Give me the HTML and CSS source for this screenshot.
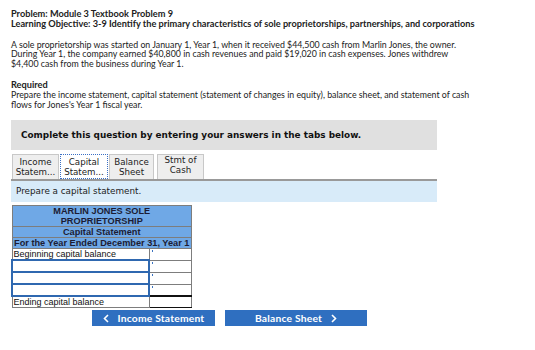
FILE: index.html
```html
<!DOCTYPE html>
<html lang="en">
<head>
    <meta charset="UTF-8">
    <title>Module 3 Textbook Problem 9</title>
    <link rel="stylesheet" href="styles.css">
</head>
<body>
    <div class="intro">
        <p class="heading">Problem: Module 3 Textbook Problem 9<br>Learning Objective: 3-9 Identify the primary characteristics of sole proprietorships, partnerships, and corporations</p>
        <p>A sole proprietorship was started on January 1, Year 1, when it received $44,500 cash from Marlin Jones, the owner. During Year 1, the company earned $40,800 in cash revenues and paid $19,020 in cash expenses. Jones withdrew $4,400 cash from the business during Year 1.</p>
        <p><span class="heading">Required</span><br>Prepare the income statement, capital statement (statement of changes in equity), balance sheet, and statement of cash flows for Jones's Year 1 fiscal year.</p>
    </div>

    <div class="question">
        <div class="banner">Complete this question by entering your answers in the tabs below.</div>
        <div class="tabs">
            <div class="tab tab-income">Income<br>Statem...</div>
            <div class="tab tab-capital active">Capital<br>Statem...</div>
            <div class="tab tab-balance">Balance<br>Sheet</div>
            <div class="tab tab-cash">Stmt of<br>Cash</div>
        </div>
        <div class="prompt">Prepare a capital statement.</div>

        <table class="sheet">
            <tr><th colspan="2">MARLIN JONES SOLE<br>PROPRIETORSHIP</th></tr>
            <tr><th colspan="2">Capital Statement</th></tr>
            <tr><th colspan="2">For the Year Ended December 31, Year 1</th></tr>
            <tr><td class="label">Beginning capital balance</td><td class="amount"></td></tr>
            <tr><td class="label input"></td><td class="amount"></td></tr>
            <tr><td class="label input"></td><td class="amount"></td></tr>
            <tr><td class="label input"></td><td class="amount"></td></tr>
            <tr><td class="label">Ending capital balance</td><td class="amount total"></td></tr>
        </table>

        <div class="nav">
            <button class="nav-btn prev">
                <svg class="chev" width="6" height="9" viewBox="0 0 6 9"><path d="M5 1 L1.5 4.5 L5 8" fill="none" stroke="#fff" stroke-width="1.6"/></svg>
                Income Statement
            </button>
            <button class="nav-btn next">
                Balance Sheet
                <svg class="chev" width="6" height="9" viewBox="0 0 6 9"><path d="M1 1 L4.5 4.5 L1 8" fill="none" stroke="#fff" stroke-width="1.6"/></svg>
            </button>
        </div>
    </div>
</body>
</html>
```

FILE: styles.css
```css
body {
    margin: 0;
    padding: 9px 11px;
    font-family: 'Lato', 'Open Sans', sans-serif;
    font-size: 8.8px;
    color: #222;
}
.intro p {
    margin: 0 0 11px 0;
    line-height: 9.8px;
    max-width: 460px;
}
.intro p.heading {
    white-space: nowrap;
}
.heading {
    font-weight: bold;
    font-size: 9.2px;
}
.question {
    width: 426px;
    margin-top: 11px;
}
.banner {
    background-color: #e0e0e0;
    font-family: 'DejaVu Sans', Verdana, sans-serif;
    font-weight: bold;
    font-size: 8.9px;
    color: #111;
    padding: 0 10px;
    height: 30px;
    line-height: 30px;
}
.tabs {
    display: flex;
    margin-top: 4px;
    padding-left: 1px;
    border-bottom: 2px solid #999;
}
.tab {
    box-sizing: border-box;
    font-family: 'DejaVu Sans', Verdana, sans-serif;
    font-size: 8.7px;
    line-height: 10px;
    text-align: center;
    background-color: #eeeeee;
    border: 1px solid #c8c8c8;
    border-bottom: none;
    padding: 2px 0 1px 0;
    color: #222;
    margin-right: 1px;
}
.tab-income { width: 47px; }
.tab-capital { width: 48px; }
.tab-balance { width: 45px; }
.tab-cash {
    width: 47px;
    margin-left: 2px;
    padding: 0 0 3px 0;
}
.tab.active {
    background-color: #fff;
    border: 1px dotted #3a6fc4;
}
.prompt {
    background-color: #d8ebf9;
    font-family: 'DejaVu Sans', Verdana, sans-serif;
    font-size: 8.8px;
    color: #222;
    height: 21px;
    line-height: 21px;
    padding-left: 5px;
}
.sheet {
    border-collapse: collapse;
    margin-top: 3px;
    width: 181px;
    font-family: 'Liberation Sans', Arial, sans-serif;
    font-size: 9px;
    border: 1px solid #7d7d7d;
}
.sheet th {
    background-color: #6fa8e6;
    border: 1px solid #7d7d7d;
    color: #1c1c34;
    font-weight: bold;
    font-size: 9.2px;
    line-height: 10px;
    padding: 0;
    white-space: nowrap;
}
.sheet td {
    height: 10px;
    padding: 0 1px;
    line-height: 10px;
    border: 1px solid #7d7d7d;
    background-color: #fff;
    color: #111;
}
.sheet td.label {
    width: 133px;
}
.sheet td.input {
    border: 2px solid #2f68b0;
}
.sheet td.amount {
    position: relative;
}
.sheet td.amount::before {
    content: "";
    position: absolute;
    left: 2px;
    top: 1px;
    width: 1px;
    height: 2px;
    background-color: #3a72c0;
}
.sheet td.total {
    border-top: 2px solid #111;
    border-bottom: 1px solid #111;
}
.sheet td.total::before {
    display: none;
}
.nav {
    display: flex;
    gap: 10px;
    margin-top: 2px;
    padding-left: 81px;
}
.nav-btn {
    display: flex;
    align-items: center;
    justify-content: center;
    gap: 9px;
    background-color: #2f6fc0;
    color: #fff;
    border: none;
    height: 16px;
    font-family: 'Lato', 'Open Sans', sans-serif;
    font-weight: bold;
    font-size: 10.3px;
    letter-spacing: 0.2px;
    padding: 0;
    cursor: pointer;
}
.prev {
    width: 123px;
}
.next {
    width: 142px;
}
```
